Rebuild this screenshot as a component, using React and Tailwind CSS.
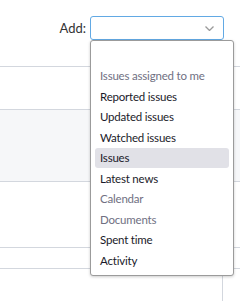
import React from 'react';

const options = [
  { label: '', muted: false },
  { label: 'Issues assigned to me', muted: true },
  { label: 'Reported issues' },
  { label: 'Updated issues' },
  { label: 'Watched issues' },
  { label: 'Issues', active: true },
  { label: 'Latest news' },
  { label: 'Calendar', muted: true },
  { label: 'Documents', muted: true },
  { label: 'Spent time' },
  { label: 'Activity' },
];

const App = () => {
  return (
    <div className="relative w-[240px] h-[301px] overflow-hidden bg-white font-['Lato',sans-serif] text-[12px]">
      {/* header with the Add select */}
      <div className="h-[66px] flex items-start justify-end pr-[16px] pt-[16px]">
        <span className="mt-[3px] mr-[4px] text-[13px] text-[#333]">Add:</span>
        <div className="w-[134px] h-[24px] border border-[#62a9e4] rounded-[3px] flex items-center justify-end pr-[9px]">
          <svg width="9" height="5" viewBox="0 0 9 5" fill="none">
            <path d="M0.5 0.5L4.5 4.5L8.5 0.5" stroke="#9a9a9a" strokeWidth="1.3" />
          </svg>
        </div>
      </div>

      {/* page content behind the menu */}
      <div className="border-t border-[#d3d7de]">
        <div className="h-[42px]" />
        <div className="h-[72px] border-t border-[#d3d7de] bg-[#f6f7f9]" />
        <div className="h-[66px] border-t border-[#d3d7de]" />
        <div className="h-[21px] border-t border-[#d3d7de]" />
        <div className="h-[40px] border-t border-[#d3d7de] flex">
          <div className="w-[223px] border-r border-[#d3d7de]" />
        </div>
      </div>

      {/* open dropdown */}
      <div className="absolute left-[90px] top-[40px] w-[144px] border border-[#9b9b9b] rounded-[3px] bg-white shadow-[0_1px_3px_rgba(0,0,0,0.2)] p-[4px] text-[11.5px] tracking-[-0.2px]">
        {options.map((o, i) => (
          <div
            key={i}
            className={
              'h-[20.5px] flex items-center px-[5px] rounded-[3px] whitespace-nowrap ' +
              (o.active ? 'bg-[#e1e1e7] text-[#1a1a2a]' : o.muted ? 'text-[#707082]' : 'text-[#1a1a2a]')
            }
          >
            {o.label}
          </div>
        ))}
      </div>
    </div>
  );
};

export default App;
